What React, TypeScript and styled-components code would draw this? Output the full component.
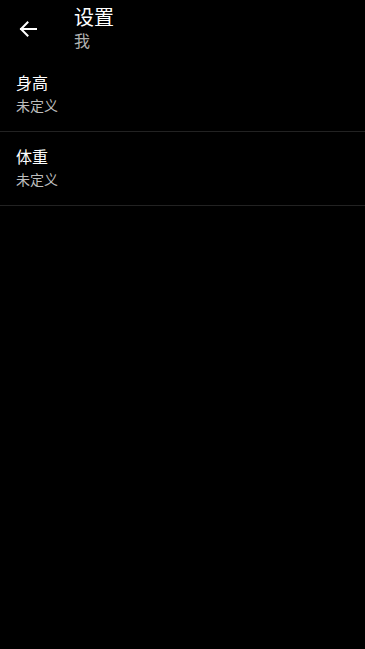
import React from "react";
import styled, { createGlobalStyle } from "styled-components";

const Global = createGlobalStyle`
  html, body { margin: 0; padding: 0; background: #000; }
  body { font-family: Roboto, "Noto Sans CJK SC", sans-serif; color: #fff; }
`;

const Page = styled.div`
  width: 365px;
  min-height: 649px;
  background: #000;
  display: flex;
  flex-direction: column;
`;

const Header = styled.header`
  height: 58px;
  display: flex;
  align-items: center;
`;

const BackButton = styled.button`
  width: 56px;
  height: 56px;
  display: flex;
  align-items: center;
  justify-content: center;
  background: none;
  border: 0;
  padding: 0;
  color: #fff;
`;

const Titles = styled.div`
  display: flex;
  flex-direction: column;
  margin-left: 18px;
`;

const Title = styled.div`
  font-size: 20px;
  line-height: 24px;
  color: #fff;
`;

const Subtitle = styled.div`
  font-size: 16px;
  line-height: 20px;
  margin-top: 2px;
  color: #b0b0b0;
`;

const Row = styled.div`
  padding: 14px 16px 15px;
  border-bottom: 1px solid #222;
  display: flex;
  flex-direction: column;
`;

const RowTitle = styled.div`
  font-size: 16px;
  line-height: 24px;
  color: #fff;
`;

const RowValue = styled.div`
  font-size: 14px;
  line-height: 20px;
  color: #bdbdbd;
`;

const ArrowIcon = () => (
  <svg width="24" height="24" viewBox="0 0 24 24" fill="none">
    <path d="M20 12H5M11.5 5.5L5 12l6.5 6.5" stroke="#fff" strokeWidth="2" strokeLinecap="square" />
  </svg>
);

export default function App() {
  const items = [
    { title: "身高", value: "未定义" },
    { title: "体重", value: "未定义" },
  ];
  return (
    <Page>
      <Global />
      <Header>
        <BackButton aria-label="back">
          <ArrowIcon />
        </BackButton>
        <Titles>
          <Title>设置</Title>
          <Subtitle>我</Subtitle>
        </Titles>
      </Header>
      {items.map((it) => (
        <Row key={it.title}>
          <RowTitle>{it.title}</RowTitle>
          <RowValue>{it.value}</RowValue>
        </Row>
      ))}
    </Page>
  );
}
